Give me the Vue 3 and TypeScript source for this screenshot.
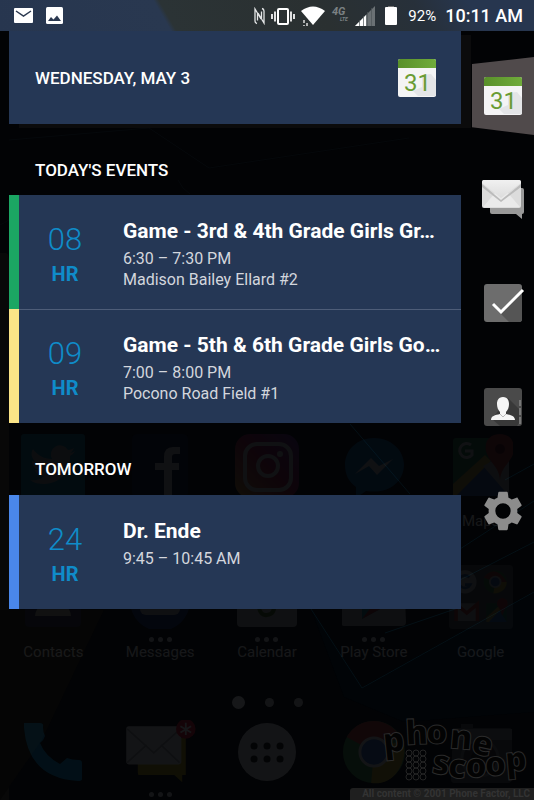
<script setup lang="ts">
interface CalendarEvent {
  id: number
  value: string
  unit: string
  title: string
  time: string
  place?: string
  tone: 'green' | 'yellow' | 'blue'
}

interface Section {
  heading: string
  events: CalendarEvent[]
}

interface App {
  icon: string
  label: string
  more?: boolean
}

const sections: Section[] = [
  {
    heading: "TODAY'S EVENTS",
    events: [
      { id: 1, value: '08', unit: 'HR', title: 'Game - 3rd & 4th Grade Girls Gr…', time: '6:30 – 7:30 PM', place: 'Madison Bailey Ellard #2', tone: 'green' },
      { id: 2, value: '09', unit: 'HR', title: 'Game - 5th & 6th Grade Girls Go…', time: '7:00 – 8:00 PM', place: 'Pocono Road Field #1', tone: 'yellow' },
    ],
  },
  {
    heading: 'TOMORROW',
    events: [
      { id: 3, value: '24', unit: 'HR', title: 'Dr. Ende', time: '9:45 – 10:45 AM', tone: 'blue' },
    ],
  },
]

const rows: App[][] = [
  [
    { icon: 'twitter', label: '' },
    { icon: 'facebook', label: '' },
    { icon: 'instagram', label: '' },
    { icon: 'messenger', label: '' },
    { icon: 'maps', label: 'Maps' },
  ],
  [
    { icon: 'contacts', label: 'Contacts' },
    { icon: 'messages', label: 'Messages', more: true },
    { icon: 'calendar', label: 'Calendar', more: true },
    { icon: 'play', label: 'Play Store', more: true },
    { icon: 'google', label: 'Google' },
  ],
]

const dock: App[] = [
  { icon: 'phone', label: '' },
  { icon: 'mail', label: '', more: true },
  { icon: 'drawer', label: '' },
  { icon: 'chrome', label: '' },
  { icon: 'camera', label: '' },
]
</script>

<template>
  <div class="screen">
    <!-- Dimmed launcher behind the panel -->
    <div class="home" aria-hidden="true">
      <svg class="wallpaper" viewBox="0 0 534 800" preserveAspectRatio="none">
        <path d="M0 253h6q3 1 3 6v541H0z" fill="#080808" />
        <path d="M0 610h104L42 740 0 800z" fill="#050505" />
        <path d="M311 609l51 79 172-96v120l-130 10-60-25z" fill="#010407" />
        <g fill="none" stroke="#041016">
          <path d="M311 609l51 79 172-96M385 633l76-26M460 549l74-48M460 580l74-38M505 480l29-16M350 424l60 70" />
          <path d="M0 225q10-5 12-8M178 180q4 9 12 14M9 140l140-12 60 40 200-30" stroke="#05080b" />
        </g>
      </svg>

      <svg class="sprites" width="0" height="0">
        <symbol id="i-twitter" viewBox="0 0 64 64">
          <rect width="64" height="64" rx="3" fill="#0795b8" />
          <path d="M54 17c-2 1-4 2-5 2 2-1 3-3 4-5-2 1-4 2-6 2a9 9 0 0 0-16 9c-8 0-15-4-19-10-3 5-1 10 3 13l-4-1c0 5 3 8 7 9h-4c1 4 5 6 9 6-4 4-9 5-14 4 4 3 9 4 14 4 17 0 27-14 26-28 2-1 4-3 5-5z" fill="#bbb" />
        </symbol>
        <symbol id="i-facebook" viewBox="0 0 64 64">
          <rect x="4" width="56" height="64" rx="5" fill="#10193c" />
          <path d="M52 13h-7q-9 0-9 10v6h-9v7h9v28h8V36h7v-7h-7v-6q0-3 3-3h5z" fill="#fff" />
        </symbol>
        <symbol id="i-instagram" viewBox="0 0 64 64">
          <linearGradient id="insta" x1="1" y1="0" x2="0" y2="1"><stop offset="0" stop-color="#7830c0" /><stop offset=".5" stop-color="#d81f58" /><stop offset="1" stop-color="#ffc243" /></linearGradient>
          <rect width="64" height="64" rx="15" fill="url(#insta)" />
          <rect x="10" y="10" width="46" height="46" rx="12" fill="none" stroke="#fff" stroke-width="4" />
          <circle cx="33" cy="32" r="10" fill="none" stroke="#fff" stroke-width="4" /><circle cx="45" cy="20" r="3" fill="#fff" />
        </symbol>
        <symbol id="i-messenger" viewBox="0 0 64 64">
          <path d="M32 4C15 4 3 16 3 31c0 10 4 17 11 22v11l10-7c26 4 38-12 38-26C62 16 49 4 32 4z" fill="#087ed0" />
          <path d="M13 40l16-16 8 8 14-7-16 16-8-9z" fill="#fff" />
        </symbol>
        <symbol id="i-maps" viewBox="0 0 64 64">
          <rect x="4" y="4" width="56" height="58" rx="3" fill="#2d9254" />
          <path d="M4 62l38-37 18 20v17z" fill="#3972d5" /><path d="M4 50l32-29 6 6L7 62H4z" fill="#edc33d" /><path d="M34 32l26-14v44z" fill="#ccc" />
          <path d="M51 0c-10 0-16 7-14 17 3 12 13 15 14 29 1-14 12-18 14-29C66 6 60 0 51 0z" fill="#d63934" /><circle cx="51" cy="15" r="5" fill="#731512" />
          <path d="M22 11a7 7 0 1 0 1 10v-4h-7" fill="none" stroke="#fff" stroke-width="3" />
        </symbol>
        <symbol id="i-contacts" viewBox="0 0 64 64">
          <rect x="4" y="4" width="56" height="58" rx="4" fill="#18225d" /><circle cx="32" cy="25" r="11" fill="#fff" /><path d="M14 51q1-13 18-13t18 13z" fill="#ddd" />
        </symbol>
        <symbol id="i-messages" viewBox="0 0 64 64">
          <circle cx="32" cy="36" r="30" fill="#203d98" /><rect x="12" y="18" width="40" height="32" rx="6" fill="#eee" />
        </symbol>
        <symbol id="i-calendar" viewBox="0 0 64 64">
          <rect x="2" y="2" width="60" height="60" rx="4" fill="#eee" /><path d="M2 2h60v15H2z" fill="#83b647" /><path d="M24 43q2 8 8 7 8-1 7-10" fill="none" stroke="#578a20" stroke-width="4" />
        </symbol>
        <symbol id="i-play" viewBox="0 0 64 64">
          <path d="M2 8h60l2 49q0 4-4 4H2q-3 0-3-4z" fill="#ddd" /><path d="M20 16l33 20-33 18z" fill="#1ba9b5" /><path d="M20 54l14-18 6 7z" fill="#ce2734" />
        </symbol>
        <symbol id="i-google" viewBox="0 0 72 72">
          <rect width="72" height="72" rx="4" fill="#61686c" />
          <circle cx="18" cy="19" r="13" fill="#eee" /><path d="M23 14a7 7 0 1 0 1 8h-6" fill="none" stroke="#356fc4" stroke-width="3" />
          <circle cx="52" cy="19" r="13" fill="#469345" /><path d="M52 19L39 14q13-16 26 5z" fill="#ce4234" /><path d="M52 19h13q-1 12-15 13z" fill="#f0c72f" /><circle cx="52" cy="19" r="6" fill="#397ad2" stroke="#ddd" stroke-width="2" />
          <path d="M7 43h25v20H7z" fill="#ddd" /><path d="M8 63V44l12 10 12-10v19" fill="none" stroke="#da3930" stroke-width="4" />
          <path d="M42 43h23v21H42z" fill="#328d50" /><path d="M42 64l14-14 9 14z" fill="#3d74d1" /><path d="M42 59l14-13 3 3-14 15h-3z" fill="#e5c13c" /><path d="M60 37q-7 1-6 8 4 5 6 12 2-7 6-12 1-7-6-8z" fill="#d63731" />
        </symbol>
        <symbol id="i-phone" viewBox="0 0 64 64">
          <path d="M3 3h16q4 0 3 4 0 5 2 9-1 4-5 7 5 13 20 21l7-6q5 2 12 2 3 0 3 3v16q0 2-4 2Q7 58 3 8z" fill="#05a0e4" />
        </symbol>
        <symbol id="i-mail" viewBox="0 0 80 72">
          <path d="M15 20h54v42h-4v8l-9-8H17q-2 0-2-3z" fill="#b19b0d" /><rect x="2" y="7" width="62" height="43" rx="3" fill="#ddd" /><path d="M3 10l30 27L63 10M3 48l22-20m37 20L41 28" fill="none" stroke="#999" stroke-width="2" />
          <circle cx="69" cy="10" r="11" fill="#e4162a" /><path d="M69 3v14M63 7l12 7m0-7l-12 7" stroke="#fff" stroke-width="2" />
        </symbol>
        <symbol id="i-drawer" viewBox="0 0 64 64">
          <circle cx="32" cy="32" r="29" fill="#ddd" /><path d="M19 26h.1M32 26h.1M45 26h.1M19 39h.1M32 39h.1M45 39h.1" stroke="#111" stroke-width="7" stroke-linecap="round" />
        </symbol>
        <symbol id="i-chrome" viewBox="0 0 68 68">
          <circle cx="34" cy="34" r="33" fill="#398f43" /><path d="M34 34L5 18Q15 1 34 1t30 20H34z" fill="#b93831" /><path d="M34 34l30-13q6 16-4 32T31 67z" fill="#c4aa28" /><circle cx="34" cy="34" r="15" fill="#396dbe" stroke="#ddd" stroke-width="3" />
        </symbol>
        <symbol id="i-camera" viewBox="0 0 64 64">
          <path d="M4 8h8V4h12v4h36q3 0 3 3v48q0 4-4 4H5q-3 0-3-4z" fill="#555" /><path d="M3 9h60v11H3z" fill="#888" /><circle cx="31" cy="38" r="18" fill="#333" stroke="#777" stroke-width="3" /><circle cx="31" cy="38" r="9" fill="#111" />
        </symbol>
      </svg>

      <div class="launcher">
        <div v-for="(row, r) in rows" :key="r" class="apps">
          <div v-for="app in row" :key="app.icon" class="app">
            <svg class="app-icon"><use :href="'#i-' + app.icon" /></svg>
            <div class="more"><template v-if="app.more"><i /><i /><i /></template></div>
            <span class="app-label">{{ app.label }}</span>
          </div>
        </div>
        <div class="pages"><i class="current" /><i /><i /></div>
        <div class="apps dock">
          <div v-for="app in dock" :key="app.icon" class="app">
            <svg class="app-icon" :class="{ wide: app.icon === 'mail' }"><use :href="'#i-' + app.icon" /></svg>
            <div class="more"><template v-if="app.more"><i /><i /><i /></template></div>
          </div>
        </div>
      </div>
    </div>

    <div class="overlay">
      <header class="status">
        <div class="group notices">
          <svg width="20" height="16" viewBox="0 0 20 16"><rect x="0" y="0" width="19" height="15" rx="1" fill="#fff" /><path d="M2 3l7.500 5L17 3" fill="none" stroke="#2b3950" stroke-width="1.500" /></svg>
          <svg width="17" height="17" viewBox="0 0 17 17"><rect width="17" height="17" rx="1.500" fill="#fff" /><path d="M2 14l3-4 2.500 2.500L11 8.500l4 5.500z" fill="#2b3950" /></svg>
        </div>
        <div class="group">
          <svg width="11" height="18" viewBox="0 0 11 18"><path d="M3 16.500q-2-.5-2-2.500V2l6 10M8 1.500q2 .5 2 2.500v12L4 6M3.500 6.500v7M7.500 4.500v7" fill="none" stroke="#e4e6e7" stroke-width="1.300" /></svg>
          <svg width="24" height="18" viewBox="0 0 24 18"><rect x="7" y="2" width="10" height="15" rx="1" fill="none" stroke="#fff" stroke-width="2" /><path d="M4 4.500v10M1 7v5M20 4.500v10M23 7v5" stroke="#fff" stroke-width="1.700" /></svg>
          <svg width="24" height="20" viewBox="0 0 24 20"><path d="M0 5Q12-4 24 5L12 19z" fill="#fff" /><path d="M3 14v3m0 2v1M6 17v3" stroke="#ddd" stroke-width="1.500" /></svg>
          <svg class="network" width="18" height="24" viewBox="0 0 18 24"><text x="1" y="11" font-size="11">4G</text><text x="9" y="17" font-size="5">LTE</text></svg>
          <svg width="20" height="20" viewBox="0 0 20 20"><path d="M0 20L20 0v20z" fill="#6b7174" /><path d="M0 20l11-11v11z" fill="#fff" /><path d="M4.500 14v6M8.500 10v10M12.500 6v14M16.500 2v18" stroke="#4e5558" stroke-width=".7" /></svg>
          <svg width="21" height="20" viewBox="0 0 21 20"><path d="M7 0h6v2H7z" fill="#777" /><rect x="4" y="1" width="12" height="18" rx="1" fill="#fff" /></svg>
          <span class="charge">92%</span>
          <time class="clock">10:11 AM</time>
        </div>
      </header>

      <div class="body">
        <main class="panel">
          <div class="date-card">
            <h1>WEDNESDAY, MAY 3</h1>
            <svg width="38" height="38" viewBox="0 0 38 38"><use href="#cal31" /></svg>
          </div>
          <section v-for="section in sections" :key="section.heading">
            <h2>{{ section.heading }}</h2>
            <ul class="events">
              <li v-for="event in section.events" :key="event.id" class="event" :class="event.tone">
                <div class="countdown">
                  <span class="value">{{ event.value }}</span>
                  <span class="unit">{{ event.unit }}</span>
                </div>
                <div class="details">
                  <h3>{{ event.title }}</h3>
                  <p>{{ event.time }}</p>
                  <p v-if="event.place">{{ event.place }}</p>
                </div>
              </li>
            </ul>
          </section>
        </main>

        <nav class="rail">
          <button type="button" class="active" aria-label="Calendar">
            <svg width="38" height="38" viewBox="0 0 38 38">
              <defs>
                <linearGradient id="calTop" x1="0" y1="0" x2="1" y2="0"><stop offset="0" stop-color="#59902a" /><stop offset="1" stop-color="#70ac3b" /></linearGradient>
                <symbol id="cal31" viewBox="0 0 38 38">
                  <rect width="38" height="38" rx="2" fill="#f4f4f5" />
                  <path d="M24 16l9-1 5 6v16H20l-5-5 9-4z" fill="#e4e5e7" />
                  <path d="M0 9V2q0-2 2-2h34q2 0 2 2v7z" fill="url(#calTop)" />
                  <text x="6" y="32" font-family="Roboto, sans-serif" font-size="24" fill="#6a9c35">31</text>
                </symbol>
              </defs>
              <use href="#cal31" />
            </svg>
          </button>
          <button type="button" aria-label="Messages">
            <svg width="44" height="40" viewBox="0 0 44 40">
              <defs><linearGradient id="env" x1="0" y1="0" x2="0" y2="1"><stop offset="0" stop-color="#f1f1f1" /><stop offset="1" stop-color="#dcdcdc" /></linearGradient></defs>
              <path d="M9 9h32q2 0 2 2v22q0 2-2 2v5l-6-5H11q-2 0-2-2z" fill="#999" />
              <rect x="1" y="1" width="39" height="28" rx="2" fill="#dcdcdc" />
              <path d="M2 28l12-14h13l12 14z" fill="#eaeaea" />
              <path d="M1 5l19 16L40 5v3L20 23 1 8z" fill="#bbb" />
              <path d="M1 4q0-3 2-3h35q2 0 2 3L20 19z" fill="url(#env)" />
            </svg>
          </button>
          <button type="button" aria-label="Tasks">
            <svg width="38" height="38" viewBox="0 0 38 38" class="spill"><rect width="38" height="38" rx="3" fill="#6d6d6d" /><path d="M17 30L38 8v27q0 3-3 3H25z" fill="#555" /><path d="M9 20l8 8L39 6" fill="none" stroke="#fff" stroke-width="3" /></svg>
          </button>
          <button type="button" aria-label="People">
            <svg width="38" height="38" viewBox="0 0 38 38"><rect width="38" height="38" rx="3" fill="#4a4a4a" /><path d="M24 10l11 11v14l-2 3H16L8 31z" fill="#393939" /><path d="M36 12v6m0 2v7m0 2v7" stroke="#777" stroke-width="2" /><path d="M19 9c-5 0-6 4-6 7s1 6 3 8v2c-5 1-9 2-9 6h24c0-4-4-5-9-6v-2c2-2 3-5 3-8s-1-7-6-7z" fill="#f5f5f5" /><path d="M16 26l3 3 3-3" fill="none" stroke="#bbb" /></svg>
          </button>
          <button type="button" aria-label="Settings">
            <svg width="46" height="46" viewBox="0 0 24 24"><path fill="#8c8c8c" d="M19.430 12.980c.04-.32.07-.64.07-.98s-.03-.66-.07-.98l2.110-1.650c.19-.15.24-.42.12-.64l-2-3.460c-.12-.22-.39-.3-.61-.22l-2.490 1c-.52-.4-1.080-.73-1.690-.98l-.38-2.650C14.460 2.180 14.250 2 14 2h-4c-.25 0-.46.18-.49.42l-.38 2.650c-.61.25-1.170.59-1.690.98l-2.490-1c-.23-.09-.49 0-.61.22l-2 3.460c-.13.22-.07.49.12.64l2.110 1.650c-.04.32-.07.65-.07.98s.03.66.07.98l-2.110 1.650c-.19.15-.24.42-.12.64l2 3.460c.12.22.39.3.61.22l2.490-1c.52.4 1.080.73 1.690.98l.38 2.650c.03.24.24.42.49.42h4c.25 0 .46-.18.49-.42l.38-2.650c.61-.25 1.170-.59 1.690-.98l2.490 1c.23.09.49 0 .61-.22l2-3.460c.12-.22.07-.49-.12-.64zM12 16a4 4 0 1 1 0-8 4 4 0 0 1 0 8z" /></svg>
          </button>
        </nav>
      </div>
    </div>

    <footer class="credit">
      <svg width="152" height="84" viewBox="0 0 152 84">
        <g fill="none" stroke="#242424">
          <g v-for="y in 5" :key="y"><circle v-for="x in 3" :key="x" :cx="20 + x * 7" :cy="43 + y * 6" r="3" /></g>
        </g>
        <g class="brand">
          <text x="2 24 44 67 88" y="49 41 40 44 49" rotate="-6 -3 0 5 12">phone</text>
          <text x="49 65 83 103 124" y="69 73 73 72 68" rotate="8 6 2 -2 -5">scoop</text>
        </g>
      </svg>
      <small>All content © 2001 Phone Factor, LLC</small>
    </footer>
  </div>
</template>

<style>
body {
  margin: 0;
  background: #020305;
}
</style>

<style scoped>
.screen {
  position: relative;
  display: grid;
  min-height: 100vh;
  overflow: hidden;
  background: #020305;
  color: #fff;
  font-family: Roboto, "Noto Sans", sans-serif;
}
.home,
.overlay {
  grid-area: 1 / 1;
  min-width: 0;
}
.home {
  display: grid;
}
.wallpaper {
  grid-area: 1 / 1;
  width: 100%;
  height: 100%;
}
.sprites {
  position: absolute;
}
.launcher {
  grid-area: 1 / 1;
  display: flex;
  flex-direction: column;
  justify-content: flex-end;
  opacity: 0.08;
}
.apps {
  display: grid;
  grid-template-columns: repeat(5, 1fr);
}
.apps:not(.dock) .app-icon {
  opacity: 0.7;
}
.app {
  display: flex;
  flex-direction: column;
  align-items: center;
  height: 131px;
}
.app-icon {
  width: 64px;
  height: 64px;
}
.app-icon.wide {
  width: 80px;
}
.more {
  display: flex;
  gap: 4px;
  height: 5px;
  margin-top: 8px;
}
.more i {
  width: 5px;
  height: 5px;
  border-radius: 50%;
  background: #ddd;
}
.app-label {
  font-size: 15px;
  line-height: 20px;
  color: #fff;
}
.pages {
  display: flex;
  justify-content: center;
  align-items: center;
  gap: 20px;
  height: 12px;
}
.pages i {
  width: 9px;
  height: 9px;
  border-radius: 50%;
  background: #ddd;
}
.pages .current {
  width: 13px;
  height: 13px;
  background: #fff;
}
.dock {
  padding-top: 12px;
}
.dock .app {
  height: 80px;
}
.overlay {
  position: relative;
}
.status {
  display: flex;
  justify-content: space-between;
  align-items: center;
  height: 31px;
  padding: 0 11px 0 14px;
  background: linear-gradient(60deg, #27364f 0, #293850 31%, #2b3335 32%, #2a3031 60%, #27303a 78%, #27364f 88%);
}
.group {
  display: flex;
  align-items: center;
  gap: 6px;
}
.notices {
  gap: 12px;
}
.network {
  fill: #7b8183;
  font-weight: 700;
  font-style: italic;
}
.charge {
  font-size: 15px;
  line-height: 20px;
}
.clock {
  padding-left: 3px;
  font-size: 18px;
  font-weight: 500;
  line-height: 20px;
}
.body {
  display: grid;
  grid-template-columns: minmax(0, 1fr) 62px;
  column-gap: 11px;
  padding-left: 9px;
}
.date-card {
  display: flex;
  justify-content: space-between;
  align-items: center;
  height: 93px;
  padding: 0 25px 0 26px;
  background: #253755;
  box-shadow: 10px 4px 0 #0b0b0c;
}
h1,
h2 {
  margin: 0;
  font-size: 17px;
  font-weight: 500;
  line-height: 24px;
}
h2 {
  padding: 34px 26px 13px;
}
section + section h2 {
  padding-bottom: 14px;
}
.events {
  margin: 0;
  padding: 0;
  list-style: none;
}
.event {
  display: grid;
  grid-template-columns: 92px minmax(0, 1fr);
  box-sizing: border-box;
  height: 114px;
  padding-top: 24px;
  border-left: 10px solid;
  background: #253755;
}
.event + .event {
  box-shadow: inset 0 1px #4e5d78;
}
.green {
  border-color: #1ba663;
}
.yellow {
  border-color: #fbe487;
}
.blue {
  border-color: #4a87ea;
}
.countdown {
  display: flex;
  flex-direction: column;
  align-items: center;
  color: #0f8cc9;
}
.value {
  font-size: 31px;
  font-weight: 300;
  line-height: 41px;
}
.unit {
  font-size: 20px;
  font-weight: 700;
  line-height: 28px;
}
.details {
  padding-left: 12px;
}
h3 {
  margin: 0 0 5px;
  overflow: hidden;
  font-size: 21px;
  font-weight: 700;
  line-height: 24px;
  text-overflow: ellipsis;
  white-space: nowrap;
}
p {
  margin: 0;
  color: #d3d6dd;
  font-size: 16px;
  line-height: 21px;
}
.rail {
  display: flex;
  flex-direction: column;
  padding-top: 12px;
}
.rail button {
  display: flex;
  justify-content: center;
  align-items: center;
  height: 104px;
  padding: 0;
  border: 0;
  background: none;
}
.rail .active {
  height: 78px;
  margin: 14px 0 12px;
  background: #504a4b;
  clip-path: polygon(0 9%, 100% 0, 100% 100%, 0 90%);
}
.spill {
  overflow: visible;
}
.credit {
  position: absolute;
  right: 0;
  bottom: 0;
  display: flex;
  flex-direction: column;
  align-items: flex-start;
}
.credit svg {
  margin-left: 32px;
  overflow: visible;
}
.credit small {
  box-sizing: border-box;
  width: 184px;
  padding: 0 4px;
  border-radius: 3px 0 0;
  background: #1f1f1f;
  color: #333;
  font-size: 10px;
  font-weight: 700;
  line-height: 12px;
  text-align: right;
  white-space: nowrap;
}
.brand {
  fill: #030303;
  stroke: #2a2a2a;
  stroke-width: 1;
  font-family: "Open Sans", sans-serif;
  font-size: 34px;
  font-weight: 800;
}
</style>
